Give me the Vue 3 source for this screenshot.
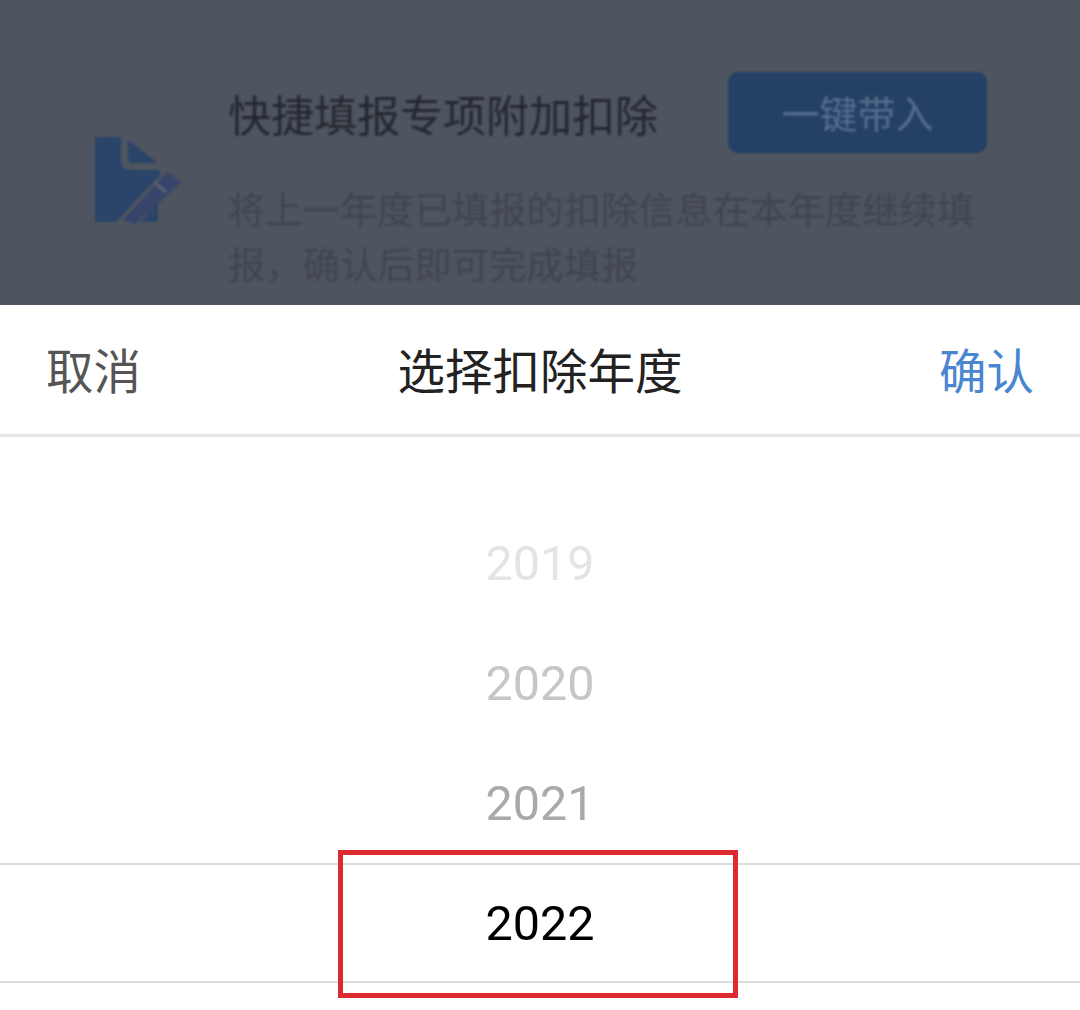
<script setup>
const years = [
  { text: '2019', cls: 'y-far' },
  { text: '2020', cls: 'y-mid' },
  { text: '2021', cls: 'y-near' },
  { text: '2022', cls: 'y-sel' }
];
</script>

<template>
  <div class="page">
    <div class="backdrop">
      <div class="card">
        <svg class="doc-icon" viewBox="0 0 96 100" width="96" height="100">
          <path d="M7 7H33V30Q33 40 43 40H72V45L28 92H7Z" fill="#2a4569" />
          <path d="M40 10L70 33H44Q40 33 40 29Z" fill="#2a4569" />
          <path d="M58 86L70 73V92H52Z" fill="#2a4569" />
          <path d="M79 42L94 52L47 94L35 90Z" fill="#38456a" />
          <path d="M67 53L78 62" stroke="#5a6375" stroke-width="3" fill="none" />
        </svg>
        <div class="card-body">
          <div class="card-top">
            <div class="card-title">快捷填报专项附加扣除</div>
            <div class="one-key">一键带入</div>
          </div>
          <div class="card-desc">将上一年度已填报的扣除信息在本年度继续填报，确认后即可完成填报</div>
        </div>
      </div>
    </div>

    <div class="sheet">
      <div class="sheet-head">
        <span class="cancel">取消</span>
        <span class="sheet-title">选择扣除年度</span>
        <span class="confirm">确认</span>
      </div>
      <div class="picker">
        <div v-for="y in years" :key="y.text" class="year" :class="y.cls">
          {{ y.text }}
          <div v-if="y.cls === 'y-sel'" class="red-mark"></div>
        </div>
      </div>
    </div>
  </div>
</template>

<style scoped>
.page {
  width: 1080px;
  height: 1010px;
  overflow: hidden;
  background: #fff;
  font-family: "Noto Sans CJK SC", "Liberation Sans", sans-serif;
}

.backdrop {
  height: 305px;
  background: #4f5560;
  overflow: hidden;
  box-sizing: border-box;
  padding: 72px 93px 0 88px;
}

.card {
  display: flex;
  align-items: flex-start;
  gap: 44px;
  filter: blur(1px);
}

.doc-icon {
  flex: none;
  margin-top: 58px;
}

.card-body {
  flex: 1;
  min-width: 0;
}

.card-top {
  display: flex;
  justify-content: space-between;
  align-items: center;
  height: 81px;
}

.card-title {
  font-size: 43px;
  color: #23272f;
  white-space: nowrap;
}

.one-key {
  width: 259px;
  height: 81px;
  line-height: 79px;
  text-align: center;
  background: #244064;
  border-radius: 10px;
  font-size: 38px;
  color: #566d8d;
}

.card-desc {
  margin-top: 28px;
  width: 752px;
  font-size: 37.3px;
  line-height: 55px;
  color: #40454e;
}

.sheet {
  background: #fff;
}

.sheet-head {
  height: 132px;
  box-sizing: border-box;
  padding: 0 46px 3px 46px;
  display: flex;
  justify-content: space-between;
  align-items: center;
  border-bottom: 3px solid #e6e6e6;
  font-size: 47.5px;
}

.cancel {
  color: #555;
}

.sheet-title {
  color: #222;
}

.confirm {
  color: #4a86d0;
}

.picker {
  padding-top: 66px;
}

.year {
  height: 120px;
  box-sizing: border-box;
  display: flex;
  align-items: center;
  justify-content: center;
  font-family: Roboto, "Liberation Sans", sans-serif;
  font-size: 48.5px;
  position: relative;
}

.y-far {
  color: #e4e4e4;
}

.y-mid {
  color: #c6c6c6;
}

.y-near {
  color: #a9a9a9;
}

.y-sel {
  color: #000;
  border-top: 2px solid #dcdcdc;
  border-bottom: 2px solid #dcdcdc;
}

/* red annotation drawn over the selected row */
.red-mark {
  position: absolute;
  left: 338px;
  top: -15px;
  width: 400px;
  height: 148px;
  box-sizing: border-box;
  border: 5px solid #dd2a30;
}
</style>
